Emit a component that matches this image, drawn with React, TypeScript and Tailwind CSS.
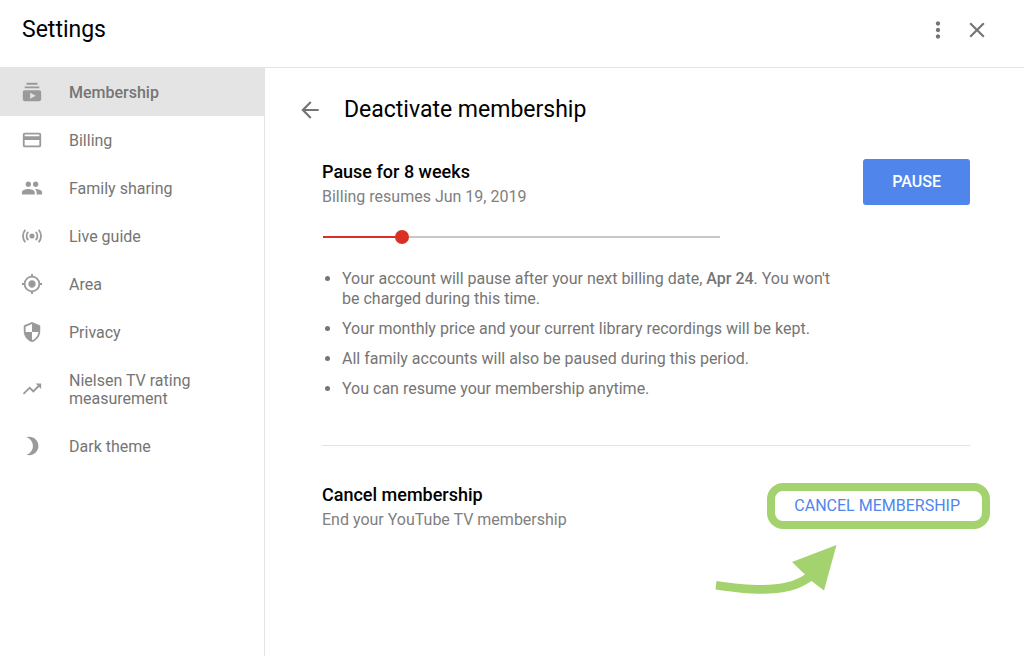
import { useState } from 'react';
import type { ReactNode } from 'react';
import {
  MdArrowBack,
  MdBrightness3,
  MdClose,
  MdGpsFixed,
  MdMoreVert,
  MdPayment,
  MdPeople,
  MdSecurity,
  MdSubscriptions,
  MdTrendingUp,
} from 'react-icons/md';

function LiveIcon() {
  return (
    <svg viewBox="0 0 24 24" width="22" height="22" fill="none" stroke="currentColor" strokeWidth="2" aria-hidden="true">
      <circle cx="12" cy="12" r="2.8" fill="currentColor" stroke="none" />
      <path d="M7.9 7.6a6.2 6.2 0 0 0 0 8.8M16.1 7.6a6.2 6.2 0 0 1 0 8.8" />
      <path d="M4.7 5.2a10.4 10.4 0 0 0 0 13.6M19.3 5.2a10.4 10.4 0 0 1 0 13.6" />
    </svg>
  );
}

const items: { label: string; icon: ReactNode }[] = [
  { label: 'Membership', icon: <MdSubscriptions size={22} /> },
  { label: 'Billing', icon: <MdPayment size={22} /> },
  { label: 'Family sharing', icon: <MdPeople size={22} /> },
  { label: 'Live guide', icon: <LiveIcon /> },
  { label: 'Area', icon: <MdGpsFixed size={22} /> },
  { label: 'Privacy', icon: <MdSecurity size={22} /> },
  { label: 'Nielsen TV rating measurement', icon: <MdTrendingUp size={22} /> },
  { label: 'Dark theme', icon: <MdBrightness3 size={22} /> },
];

const MIN_WEEKS = 4;
const MAX_WEEKS = 24;

function resumeDate(weeks: number) {
  const date = new Date(2019, 3, 24 + weeks * 7);
  return date.toLocaleDateString('en-US', { month: 'short', day: 'numeric', year: 'numeric' });
}

function WeeksSlider({ weeks, onChange }: { weeks: number; onChange: (weeks: number) => void }) {
  const filled = ((weeks - MIN_WEEKS) / (MAX_WEEKS - MIN_WEEKS)) * 100;
  return (
    <div className="relative mt-5 ml-px flex h-4 w-full max-w-[397px] items-center">
      <div className="h-0.5 w-full bg-[#c8c8c8]">
        <div className="h-full bg-[#d93025]" style={{ width: `${filled}%` }} />
      </div>
      <input
        type="range"
        aria-label="Pause length in weeks"
        min={MIN_WEEKS}
        max={MAX_WEEKS}
        value={weeks}
        onChange={(event) => onChange(Number(event.target.value))}
        className="absolute -inset-x-[7px] inset-y-0 cursor-pointer appearance-none bg-transparent [&::-webkit-slider-thumb]:size-3.5 [&::-webkit-slider-thumb]:appearance-none [&::-webkit-slider-thumb]:rounded-full [&::-webkit-slider-thumb]:bg-[#d93025]"
      />
    </div>
  );
}

export default function App() {
  const [selected, setSelected] = useState('Membership');
  const [weeks, setWeeks] = useState(8);

  return (
    <div className="flex min-h-screen flex-col bg-white font-['Roboto',sans-serif] text-base text-[#757575]">
      <header className="flex items-center justify-between border-b border-[#e4e4e4] pt-4 pr-[34px] pb-[23px] pl-[22px]">
        <h1 className="text-[23px] leading-7 text-black">Settings</h1>
        <div className="flex items-center gap-[13px]">
          <button type="button" aria-label="More options">
            <MdMoreVert size={26} />
          </button>
          <button type="button" aria-label="Close">
            <MdClose size={26} />
          </button>
        </div>
      </header>

      <div className="flex grow">
        <nav className="w-[265px] shrink-0 border-r border-[#e4e4e4]" aria-label="Settings sections">
          <ul>
            {items.map(({ label, icon }) => (
              <li key={label}>
                <button
                  type="button"
                  onClick={() => setSelected(label)}
                  className={
                    selected === label
                      ? 'flex w-full items-center gap-[27px] bg-[#e4e4e4] py-3.5 pr-12 pl-[22px] text-left font-medium'
                      : 'flex w-full items-center gap-[27px] py-3.5 pr-12 pl-[22px] text-left'
                  }
                >
                  <span className="flex size-5 shrink-0 items-center justify-center text-[#9a9a9a] *:shrink-0">
                    {icon}
                  </span>
                  <span className="pt-0.5 leading-[18px]">{label}</span>
                </button>
              </li>
            ))}
          </ul>
        </nav>

        <main className="grow pt-[26px] pr-[54px] pl-[57px]">
          <div className="-ml-[25px] flex items-center gap-[21px]">
            <button type="button" aria-label="Back">
              <MdArrowBack size={26} />
            </button>
            <h2 className="text-[23px] leading-8 text-black">Deactivate membership</h2>
          </div>

          <section className="mt-[33px] border-b border-[#e4e4e4] pb-[46px]">
            <div className="flex items-start justify-between">
              <div>
                <h3 className="text-lg leading-[26px] font-medium text-black">Pause for {weeks} weeks</h3>
                <p className="leading-6 text-[#808080]">Billing resumes {resumeDate(weeks)}</p>
              </div>
              <button
                type="button"
                className="h-[46px] rounded-[3px] bg-[#5086ec] px-[29px] font-medium text-white"
              >
                PAUSE
              </button>
            </div>

            <WeeksSlider weeks={weeks} onChange={setWeeks} />

            <ul className="mt-6 max-w-[520px] list-disc space-y-2.5 pl-5 leading-5">
              <li>
                Your account will pause after your next billing date, <b className="font-medium">Apr 24</b>. You won't be
                charged during this time.
              </li>
              <li>Your monthly price and your current library recordings will be kept.</li>
              <li>All family accounts will also be paused during this period.</li>
              <li>You can resume your membership anytime.</li>
            </ul>
          </section>

          <section className="mt-9 flex items-start justify-between">
            <div>
              <h3 className="text-lg leading-[26px] font-medium text-black">Cancel membership</h3>
              <p className="leading-6 text-[#808080]">End your YouTube TV membership</p>
            </div>
            <div className="relative">
              <button type="button" className="h-12 px-2.5 text-[#5086ec]">
                CANCEL MEMBERSHIP
              </button>
              <div className="pointer-events-none absolute inset-y-px -right-5 -left-[17px] rounded-2xl border-8 border-[#a4d26f]" />
              <svg
                className="pointer-events-none absolute top-[63px] right-[133px]"
                width="122"
                height="50"
                viewBox="0 0 122 50"
                fill="#a4d26f"
                aria-hidden="true"
              >
                <path d="M121.500 0 77 17 90 29.500C73 41 48 43 1.500 36L0.500 44.500C50 52 76 50 96.500 36L109 45.500Z" />
              </svg>
            </div>
          </section>
        </main>
      </div>
    </div>
  );
}
